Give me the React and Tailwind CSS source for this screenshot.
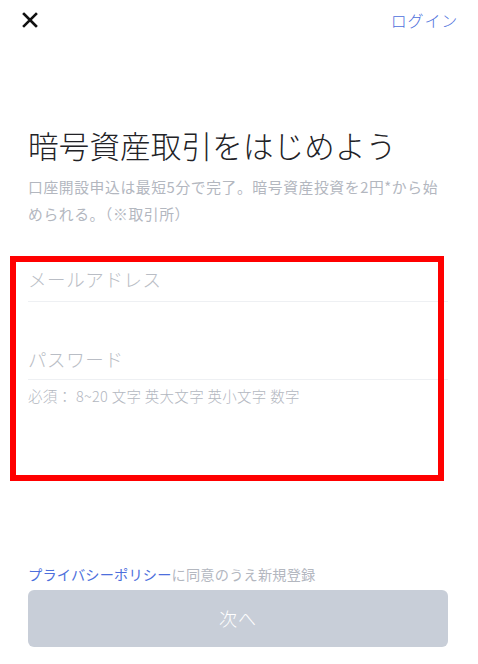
import React from 'react';

const font = { fontFamily: '"Noto Sans CJK JP", "Noto Sans", sans-serif' };

const App = () => {
  return (
    <div className="relative w-[478px] h-[664px] bg-white overflow-hidden flex flex-col" style={font}>
      {/* Header */}
      <header className="h-[40px] flex items-center justify-between pl-[21px] pr-[20px]">
        <button className="w-[18px] h-[18px] flex items-center justify-center text-[#111]">
          <svg width="16" height="16" viewBox="0 0 16 16" fill="none" stroke="currentColor" strokeWidth="2.6" strokeLinecap="square">
            <path d="M2 2 L14 14 M14 2 L2 14" />
          </svg>
        </button>
        <a href="#" className="text-[16px] text-[#4d6fdc] tracking-[0.8px] font-light">ログイン</a>
      </header>

      <main className="flex flex-col pl-[28px] pr-[30px]">
        <h1 className="mt-[85px] text-[30.5px] leading-[40px] text-[#222226] tracking-[0.2px] font-light">暗号資産取引をはじめよう</h1>
        <p className="mt-[8px] text-[14.8px] leading-[27px] text-[#b3b7bf] tracking-[0.6px]">
          <span className="whitespace-nowrap">口座開設申込は最短5分で完了。暗号資産投資を2円*から始</span>
          <br />
          められる。（※取引所）
        </p>

        {/* Form */}
        <div className="mt-[29px] flex flex-col">
          <div className="h-[46px] flex items-center border-b border-[#eef0f3] pt-[2px]">
            <span className="text-[18.5px] text-[#b9bdc5] tracking-[0.6px] font-light">メールアドレス</span>
          </div>
          <div className="mt-[32px] h-[46px] flex items-center border-b border-[#eef0f3] pt-[7px]">
            <span className="text-[18.5px] text-[#b9bdc5] tracking-[0.6px] font-light">パスワード</span>
          </div>
          <p className="mt-[6px] text-[14.5px] leading-[20px] text-[#b3b7bf] tracking-[0.3px] font-light">必須： 8~20 文字 英大文字 英小文字 数字</p>
        </div>

        {/* Footer */}
        <p className="mt-[158px] text-[14.2px] leading-[20px] text-[#b3b7bf] tracking-[0.2px]">
          <span className="text-[#4d6fdc]">プライバシーポリシー</span>に同意のうえ新規登録
        </p>
        <button className="mt-[6px] h-[57px] w-full rounded-[6px] bg-[#c8ced8] text-white text-[18px] tracking-[1px] font-light">次へ</button>
      </main>

      {/* annotation box */}
      <div className="absolute left-[10px] top-[256px] w-[434px] h-[225px] border-[6px] border-[#ff0000] pointer-events-none" />
    </div>
  );
};

export default App;
